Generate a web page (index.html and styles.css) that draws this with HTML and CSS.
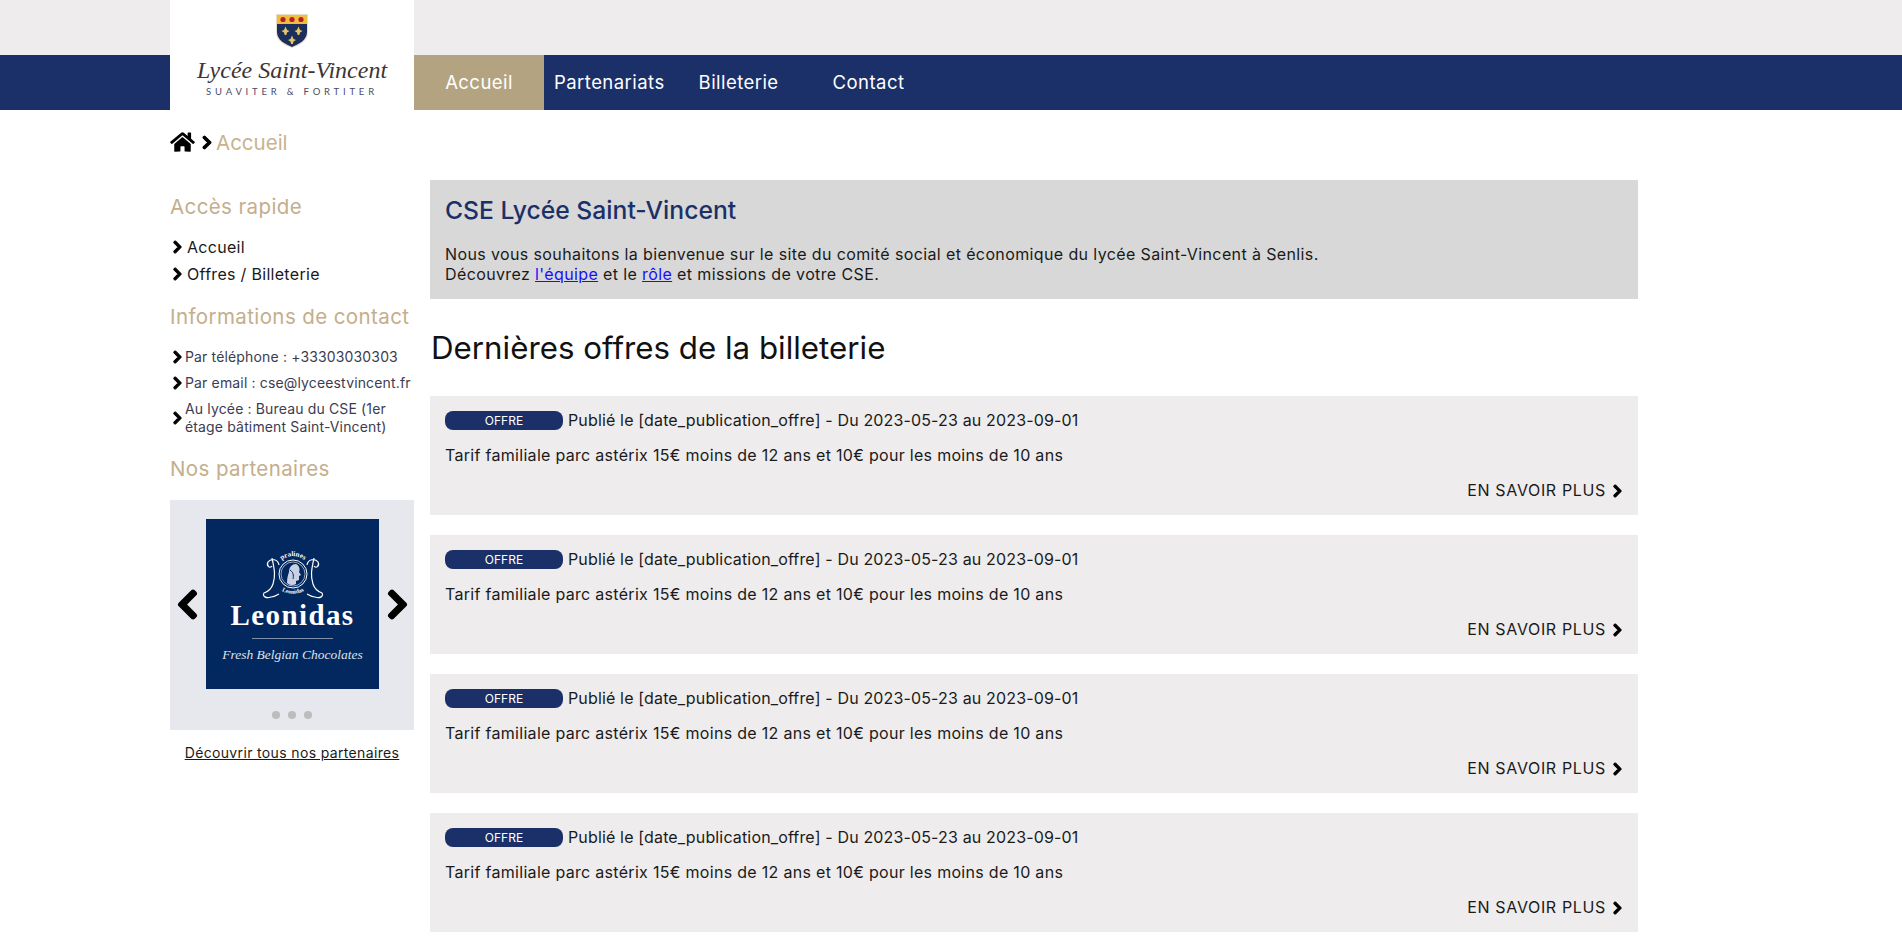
FILE: index.html
```html
<!DOCTYPE html>
<html lang="fr">
<head>
    <meta charset="UTF-8">
    <meta name="viewport" content="width=device-width, initial-scale=1.0">
    <title>CSE Lycée Saint-Vincent</title>
    <link rel="stylesheet" href="styles.css">
</head>
<body>
    <!-- icons used all over the page -->
    <svg class="sprites" aria-hidden="true">
        <symbol id="chevron" viewBox="0 0 320 512">
            <path d="M285.476 272.971L91.132 467.314c-9.373 9.373-24.569 9.373-33.941 0l-22.667-22.667c-9.357-9.357-9.375-24.522-.04-33.901L188.505 256 34.484 101.255c-9.335-9.379-9.317-24.544.04-33.901l22.667-22.667c9.373-9.373 24.569-9.373 33.941 0L285.475 239.03c9.373 9.372 9.373 24.568.001 33.941z"/>
        </symbol>
    </svg>

    <header class="site-header">
        <div class="top-strip"></div>
        <div class="nav-strip">
            <nav class="nav">
                <a class="nav-link active" href="#">Accueil</a>
                <a class="nav-link partners" href="#">Partenariats</a>
                <a class="nav-link tickets" href="#">Billeterie</a>
                <a class="nav-link contact" href="#">Contact</a>
            </nav>
        </div>
        <!-- logo sits over both strips -->
        <a class="logo" href="#">
            <svg class="crest" viewBox="0 0 32 34">
                <path d="M0 0H32V18C32 27 24 31 16 34C8 31 0 27 0 18Z" fill="#e9dcc6"/>
                <path d="M1 1H31V10H1Z" fill="#f2bd3c"/>
                <path d="M1 10H31V18C31 26 23 30 16 33C9 30 1 26 1 18Z" fill="#1c2f5c"/>
                <circle cx="7" cy="5.500" r="2.600" fill="#b3202c"/>
                <circle cx="16" cy="5.500" r="2.600" fill="#b3202c"/>
                <circle cx="25" cy="5.500" r="2.600" fill="#b3202c"/>
                <path d="M9.500 12.500L11 16 13.500 17 11 18.500 10.300 21H8.700L8 18.500 5.500 17 8 16Z" fill="#e3c766"/>
                <path d="M22.500 12.500L24 16 26.500 17 24 18.500 23.300 21H21.700L21 18.500 18.500 17 21 16Z" fill="#e3c766"/>
                <path d="M16 21.500L17.500 25 20 26 17.500 27.500 16.800 30H15.200L14.500 27.500 12 26 14.500 25Z" fill="#e3c766"/>
            </svg>
            <span class="logo-name">Lycée Saint-Vincent</span>
            <span class="logo-motto">SUAVITER &amp; FORTITER</span>
        </a>
    </header>

    <div class="breadcrumb">
        <svg class="home-icon" viewBox="0 0 576 512"><path d="M280.37 148.26L96 300.11V464a16 16 0 0 0 16 16l112.06-.29a16 16 0 0 0 15.92-16V368a16 16 0 0 1 16-16h64a16 16 0 0 1 16 16v95.64a16 16 0 0 0 16 16.05L464 480a16 16 0 0 0 16-16V300L295.67 148.26a12.19 12.19 0 0 0-15.3 0zM571.6 251.47L488 182.56V44.05a12 12 0 0 0-12-12h-56a12 12 0 0 0-12 12v72.61L318.47 43a48 48 0 0 0-61 0L4.34 251.47a12 12 0 0 0-1.6 16.9l25.5 31A12 12 0 0 0 45.15 301l235.22-193.74a12.19 12.19 0 0 1 15.3 0L530.9 301a12 12 0 0 0 16.9-1.6l25.5-31a12 12 0 0 0-1.7-16.93z"/></svg>
        <svg class="chev crumb-chev"><use href="#chevron"/></svg>
        <span>Accueil</span>
    </div>

    <div class="layout">
        <aside class="sidebar">
            <h3 class="side-title">Accès rapide</h3>
            <ul class="quick-list">
                <li><svg class="chev"><use href="#chevron"/></svg>Accueil</li>
                <li><svg class="chev"><use href="#chevron"/></svg>Offres / Billeterie</li>
            </ul>

            <h3 class="side-title">Informations de contact</h3>
            <ul class="contact-list">
                <li><svg class="chev"><use href="#chevron"/></svg><span>Par téléphone : +33303030303</span></li>
                <li><svg class="chev"><use href="#chevron"/></svg><span>Par email : cse@lyceestvincent.fr</span></li>
                <li><svg class="chev"><use href="#chevron"/></svg><span>Au lycée : Bureau du CSE (1er étage bâtiment Saint-Vincent)</span></li>
            </ul>

            <h3 class="side-title">Nos partenaires</h3>
            <div class="carousel">
                <div class="slide-row">
                    <svg class="arrow arrow-left"><use href="#chevron"/></svg>
                    <div class="slide">
                        <svg class="emblem" viewBox="0 0 60 50" fill="none" stroke="#fff" stroke-width="1.200">
                            <defs>
                                <path id="arc-top" d="M13 22A17 17 0 0 1 47 22"/>
                                <path id="arc-bottom" d="M14 36C22 45 38 45 46 36"/>
                            </defs>
                            <!-- medallion and head -->
                            <circle cx="30" cy="23" r="14" stroke-width="1"/>
                            <circle cx="30" cy="23" r="12" stroke-width=".6"/>
                            <path d="M24 32C24 27 25 24 26 21C26 16 29 13 33 13C37 15 37 19 36 21L38 24 36 25 36 29 33 30 33 33C30 35 26 34 24 32Z" fill="#c9d2e4" stroke="none"/>
                            <path d="M27 19C30 21 31 24 30 28" stroke="#03285f" stroke-width="1"/>
                            <!-- scrolls on each side -->
                            <path d="M16 14C15 8 8 7 5 11C3 15 7 18 9 15M9 7C11 17 13 24 10 33C8 39 4 41 1 42C-1 45 3 48 8 46C12 46 14 44 16 43"/>
                            <path d="M44 14C45 8 52 7 55 11C57 15 53 18 51 15M51 7C49 17 47 24 50 33C52 39 56 41 59 42C61 45 57 48 52 46C48 46 46 44 44 43"/>
                            <text class="emblem-word" stroke="none" fill="#fff"><textPath href="#arc-top" startOffset="50%" text-anchor="middle">pralines</textPath></text>
                            <text class="emblem-word small" stroke="none" fill="#fff"><textPath href="#arc-bottom" startOffset="50%" text-anchor="middle">Leonidas</textPath></text>
                        </svg>
                        <div class="brand">Leonidas</div>
                        <div class="brand-rule"></div>
                        <div class="brand-sub">Fresh Belgian Chocolates</div>
                    </div>
                    <svg class="arrow"><use href="#chevron"/></svg>
                </div>
                <div class="dots"><i></i><i></i><i></i></div>
            </div>
            <a class="all-partners" href="#">Découvrir tous nos partenaires</a>
        </aside>

        <main class="content">
            <section class="hero">
                <h1>CSE Lycée Saint-Vincent</h1>
                <p>Nous vous souhaitons la bienvenue sur le site du comité social et économique du lycée Saint-Vincent à Senlis.<br>
                Découvrez <a href="#">l'équipe</a> et le <a href="#">rôle</a> et missions de votre CSE.</p>
            </section>

            <h2 class="section-title">Dernières offres de la billeterie</h2>

            <article class="offer">
                <div class="offer-meta"><span class="pill">OFFRE</span>Publié le [date_publication_offre] - Du 2023-05-23 au 2023-09-01</div>
                <p class="offer-text">Tarif familiale parc astérix 15€ moins de 12 ans et 10€ pour les moins de 10 ans</p>
                <a class="more" href="#">EN SAVOIR PLUS<svg class="chev"><use href="#chevron"/></svg></a>
            </article>
            <article class="offer">
                <div class="offer-meta"><span class="pill">OFFRE</span>Publié le [date_publication_offre] - Du 2023-05-23 au 2023-09-01</div>
                <p class="offer-text">Tarif familiale parc astérix 15€ moins de 12 ans et 10€ pour les moins de 10 ans</p>
                <a class="more" href="#">EN SAVOIR PLUS<svg class="chev"><use href="#chevron"/></svg></a>
            </article>
            <article class="offer">
                <div class="offer-meta"><span class="pill">OFFRE</span>Publié le [date_publication_offre] - Du 2023-05-23 au 2023-09-01</div>
                <p class="offer-text">Tarif familiale parc astérix 15€ moins de 12 ans et 10€ pour les moins de 10 ans</p>
                <a class="more" href="#">EN SAVOIR PLUS<svg class="chev"><use href="#chevron"/></svg></a>
            </article>
            <article class="offer">
                <div class="offer-meta"><span class="pill">OFFRE</span>Publié le [date_publication_offre] - Du 2023-05-23 au 2023-09-01</div>
                <p class="offer-text">Tarif familiale parc astérix 15€ moins de 12 ans et 10€ pour les moins de 10 ans</p>
                <a class="more" href="#">EN SAVOIR PLUS<svg class="chev"><use href="#chevron"/></svg></a>
            </article>
        </main>
    </div>
</body>
</html>
```

FILE: styles.css
```css
/* Page base */
body {
    margin: 0;
    background-color: #fff;
    color: #1a1a1a;
    font-family: Inter, "Noto Sans", sans-serif;
    font-size: 16px;
}

a {
    color: inherit;
}

.sprites {
    display: none;
}

/* stroke makes the glyph as heavy as the icon font one */
.chev {
    width: 9px;
    height: 14px;
    fill: #000;
    stroke: #000;
    stroke-width: 40px;
    flex: none;
}

/* Header */
.site-header {
    position: relative;
}

.top-strip {
    height: 55px;
    background-color: #eeeced;
}

.nav-strip {
    height: 55px;
    background-color: #1b3068;
    padding-left: 414px;
}

.nav {
    display: flex;
    height: 100%;
}

.nav-link {
    display: flex;
    align-items: center;
    padding-bottom: 2px;
    box-sizing: border-box;
    color: #fff;
    font-size: 18.500px;
    letter-spacing: .45px;
    text-decoration: none;
}

.nav-link.active {
    width: 130px;
    justify-content: center;
    background-color: #b3a380;
}

.partners {
    margin-left: 10px;
}

.tickets {
    margin-left: 34px;
}

.contact {
    margin-left: 54px;
}

.logo {
    position: absolute;
    top: 0;
    left: 170px;
    width: 244px;
    height: 110px;
    background-color: #fff;
    display: flex;
    flex-direction: column;
    align-items: center;
    text-decoration: none;
}

.crest {
    width: 32px;
    height: 34px;
    margin-top: 14px;
}

.logo-name {
    margin-top: 10px;
    font-family: "Liberation Serif", serif;
    font-style: italic;
    font-size: 24px;
    line-height: 24px;
    color: #3d3535;
}

.logo-motto {
    margin-top: 4px;
    font-family: Lato, sans-serif;
    font-size: 9.500px;
    line-height: 11px;
    letter-spacing: 3.800px;
    color: #4c4a68;
}

/* Breadcrumb */
.breadcrumb {
    display: flex;
    align-items: center;
    height: 64px;
    padding-left: 170px;
    color: #c9b28f;
    font-size: 20.500px;
}

.home-icon {
    width: 25px;
    height: 22px;
    fill: #000;
}

.crumb-chev {
    margin: 0 4px 0 7px;
    width: 10px;
    height: 15px;
}

/* Two columns */
.layout {
    display: grid;
    grid-template-columns: 244px 1208px;
    gap: 16px;
    padding: 6px 0 0 170px;
}

/* Sidebar */
.sidebar {
    display: flex;
    flex-direction: column;
    padding-top: 15px;
}

.side-title {
    margin: 0;
    color: #c4ae8c;
    font-size: 20.500px;
    font-weight: 400;
    line-height: 24px;
    letter-spacing: .4px;
    white-space: nowrap;
}

.quick-list,
.contact-list {
    list-style: none;
    margin: 0;
    padding: 0;
}

.quick-list {
    margin: 14px 0 18px;
    letter-spacing: .3px;
}

.quick-list li {
    display: flex;
    align-items: center;
    gap: 5px;
    height: 27px;
    padding-left: 3px;
}

.contact-list {
    margin: 15px 0 17px;
    font-size: 14px;
    letter-spacing: .15px;
    color: #3c3c50;
}

.contact-list li {
    display: flex;
    align-items: center;
    gap: 3px;
    padding: 4px 0 4px 3px;
    line-height: 18px;
    white-space: normal;
}

.contact-list span {
    margin-right: -4px;
}

.carousel {
    margin-top: 19px;
    height: 230px;
    background-color: #e6e8ee;
}

.slide-row {
    display: flex;
    align-items: center;
    justify-content: space-between;
    padding: 19px 6px 0 7px;
}

.arrow {
    width: 21px;
    height: 33px;
    fill: #000;
    stroke: #000;
    stroke-width: 30px;
}

.arrow-left {
    transform: scaleX(-1);
}

.slide {
    width: 173px;
    height: 170px;
    background-color: #03285f;
    color: #fff;
    display: flex;
    flex-direction: column;
    align-items: center;
}

.emblem {
    width: 60px;
    height: 50px;
    margin-top: 32px;
    overflow: visible;
}

.emblem-word {
    font-family: "Liberation Serif", serif;
    font-size: 7px;
    font-weight: 700;
}

.emblem-word.small {
    font-size: 6px;
}

.brand {
    font-family: "Liberation Serif", serif;
    font-size: 29px;
    font-weight: 700;
    line-height: 28px;
    letter-spacing: 1.400px;
}

.brand-rule {
    width: 81px;
    height: 1px;
    margin-top: 9px;
    background-color: #7f90ad;
}

.brand-sub {
    margin-top: 7px;
    font-family: "Liberation Serif", serif;
    font-style: italic;
    font-size: 13.500px;
    line-height: 18px;
    color: #dde2ea;
}

.dots {
    display: flex;
    justify-content: center;
    gap: 8px;
    margin-top: 22px;
}

.dots i {
    width: 8px;
    height: 8px;
    border-radius: 50%;
    background-color: #bdbdbd;
}

.all-partners {
    margin-top: 14px;
    text-align: center;
    font-size: 14px;
    line-height: 18px;
    letter-spacing: .35px;
    white-space: nowrap;
}

/* Main column */
.hero {
    height: 119px;
    box-sizing: border-box;
    padding: 14px 15px 0;
    background-color: #d8d8d8;
}

.hero h1 {
    margin: 0;
    color: #1b3068;
    font-size: 24.700px;
    font-weight: 500;
    line-height: 32px;
}

.hero p {
    margin: 18px 0 0;
    line-height: 20px;
    letter-spacing: .38px;
}

.hero a {
    color: #1a0dff;
}

.section-title {
    margin: 31px 0 30px 1px;
    color: #111;
    font-size: 31.300px;
    font-weight: 400;
    line-height: 36px;
}

.offer {
    height: 119px;
    box-sizing: border-box;
    margin-bottom: 20px;
    padding: 15px 15px 0;
    background-color: #eeeced;
}

.offer-meta {
    display: flex;
    align-items: center;
    height: 19px;
    line-height: 17px;
    letter-spacing: .15px;
}

.pill {
    width: 118px;
    height: 19px;
    margin-right: 5px;
    border-radius: 8px;
    background-color: #1b3068;
    color: #fff;
    font-size: 12px;
    letter-spacing: 0;
    line-height: 20px;
    text-align: center;
}

.offer-text {
    margin: 16px 0 0;
    line-height: 19px;
    letter-spacing: .3px;
}

.more {
    display: flex;
    align-items: center;
    justify-content: flex-end;
    gap: 7px;
    margin: 16px 1px 0 0;
    line-height: 19px;
    letter-spacing: .65px;
    text-decoration: none;
}
```
